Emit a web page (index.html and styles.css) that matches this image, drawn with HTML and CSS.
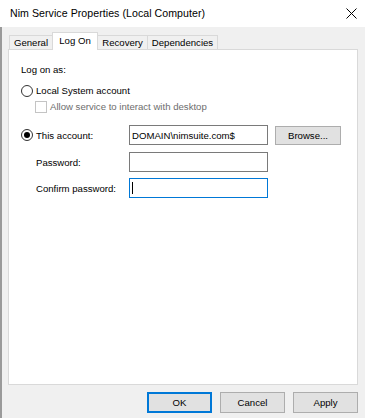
FILE: index.html
```html
<!DOCTYPE html>
<html lang="en">
<head>
    <meta charset="UTF-8">
    <meta name="viewport" content="width=device-width, initial-scale=1.0">
    <title>Nim Service Properties (Local Computer)</title>
    <link rel="stylesheet" href="styles.css">
</head>
<body>
    <div class="window">
        <div class="titlebar">
            <span class="title">Nim Service Properties (Local Computer)</span>
            <svg class="close" width="11" height="11" viewBox="0 0 11 11">
                <path d="M0.5 0.5 L10.5 10.5 M10.5 0.5 L0.5 10.5" stroke="#000" stroke-width="1" fill="none"/>
            </svg>
        </div>
        <div class="dialog">
            <div class="tabs">
                <div class="tab tab-general">General</div>
                <div class="tab tab-logon active">Log On</div>
                <div class="tab tab-recovery">Recovery</div>
                <div class="tab tab-deps">Dependencies</div>
            </div>
            <div class="panel">
                <div class="heading">Log on as:</div>
                <div class="option">
                    <span class="radio"></span>
                    <span>Local System account</span>
                </div>
                <div class="option check-row">
                    <span class="checkbox"></span>
                    <span>Allow service to interact with desktop</span>
                </div>
                <div class="account">
                    <div class="field-row first">
                        <div class="field-label radio-label">
                            <span class="radio checked"></span>
                            <span>This account:</span>
                        </div>
                        <div class="textbox">DOMAIN\nimsuite.com$</div>
                        <div class="btn browse">Browse...</div>
                    </div>
                    <div class="field-row">
                        <div class="field-label">Password:</div>
                        <div class="textbox"></div>
                    </div>
                    <div class="field-row">
                        <div class="field-label">Confirm password:</div>
                        <div class="textbox focused"><span class="caret"></span></div>
                    </div>
                </div>
            </div>
            <div class="buttons">
                <div class="btn default">OK</div>
                <div class="btn">Cancel</div>
                <div class="btn">Apply</div>
            </div>
        </div>
    </div>
</body>
</html>
```

FILE: styles.css
```css
* { box-sizing: border-box; }
body { margin: 0; font-family: "Liberation Sans", Arial, sans-serif; font-size: 9.6px; color: #000; background: #f0f0f0; }
.window { width: 365px; height: 418px; display: flex; flex-direction: column; background: #f0f0f0; }

/* title bar */
.titlebar { height: 27px; flex: none; background: #fff; display: flex; align-items: center; justify-content: space-between; padding: 0 8px 1px 10px; }
.title { font-size: 10.6px; letter-spacing: 0.05px; color: #000; }
.close { display: block; }

/* dialog body */
.dialog { flex: 1; border-left: 2px solid #9a9a9a; padding: 5px 7px 5px 6px; display: flex; flex-direction: column; }
.tabs { display: flex; align-items: flex-end; height: 17px; padding-left: 1px; position: relative; z-index: 1; }
.tab { height: 14px; line-height: 13px; text-align: center; border: 1px solid #d9d9d9; border-bottom: none; background: #f0f0f0; margin-right: -1px; white-space: nowrap; }
.tab.active { height: 18px; line-height: 15px; margin-bottom: -1px; background: #fff; }
.tab-general { width: 44px; }
.tab-logon { width: 46px; }
.tab-recovery { width: 51px; }
.tab-deps { width: 71px; }
.panel { height: 336px; background: #fff; border: 1px solid #d9d9d9; padding: 13px 12px; }

.heading { line-height: 13px; }
.option { display: flex; align-items: center; gap: 3px; height: 13px; margin-top: 8px; }
.check-row { margin-top: 3px; padding-left: 14px; color: #6d6d6d; }
.radio { width: 12px; height: 12px; border: 1px solid #333; border-radius: 50%; background: #fff; display: flex; align-items: center; justify-content: center; flex: none; }
.radio.checked::after { content: ""; width: 6px; height: 6px; border-radius: 50%; background: #000; }
.checkbox { width: 12px; height: 12px; border: 1px solid #c4c4c4; background: #fff; flex: none; }

.account { margin-top: 12px; display: flex; flex-direction: column; gap: 6px; }
.field-row { display: flex; align-items: center; height: 20px; }
.field-row.first { margin-bottom: 1px; }
.field-label { width: 108px; padding-left: 15px; }
.field-label.radio-label { padding-left: 0; display: flex; align-items: center; gap: 3px; }
.textbox { width: 139px; height: 20px; border: 1px solid #7a7a7a; background: #fff; padding-left: 2px; display: flex; align-items: center; }
.textbox.focused { border-color: #0078d7; }
.caret { width: 1px; height: 12px; background: #000; }

/* buttons */
.btn { width: 65px; height: 21px; border: 1px solid #adadad; background: #e1e1e1; display: flex; align-items: center; justify-content: center; }
.btn.browse { width: 66px; height: 19px; margin-left: 7px; }
.btn.default { border: 2px solid #0078d7; }
.buttons { margin-top: 7px; display: flex; justify-content: flex-end; gap: 8px; }
```
